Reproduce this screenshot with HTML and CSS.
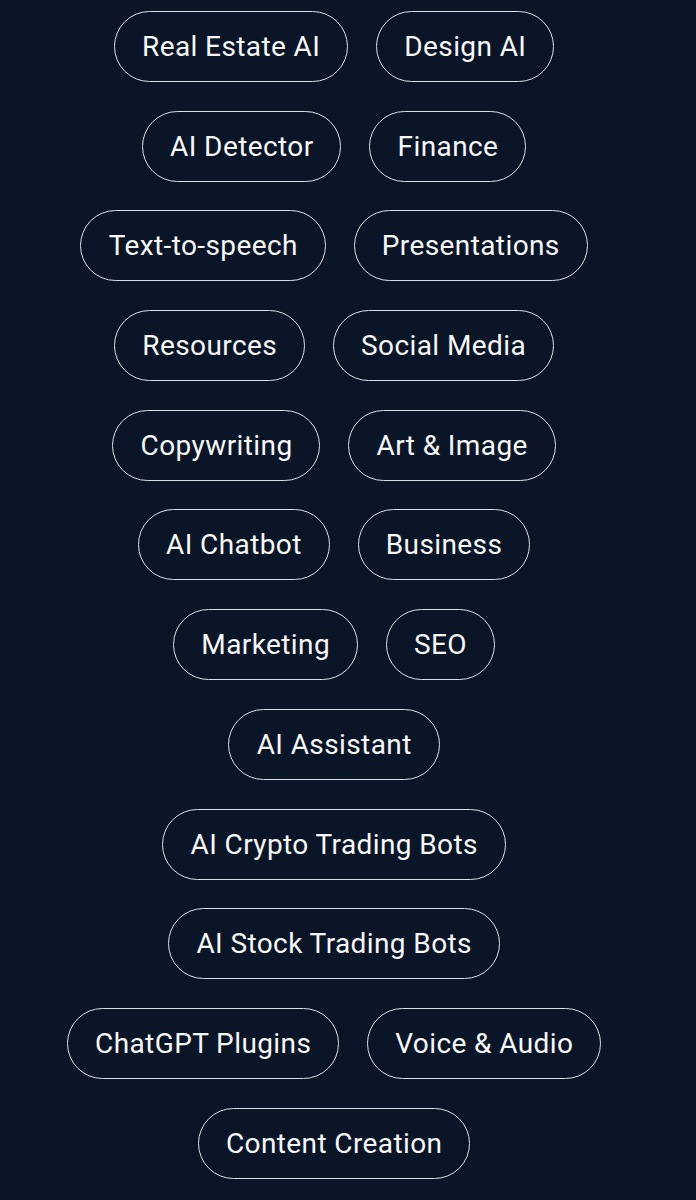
FILE: index.html
```html
<!DOCTYPE html>
<html lang="en">

<head>
    <meta charset="UTF-8">
    <meta name="viewport" content="width=device-width, initial-scale=1.0">
    <title>Categories</title>
    <link rel="stylesheet" href="styles.css">
</head>

<body>
    <div class="tags">
        <a class="tag" href="#">Real Estate AI</a>
        <a class="tag" href="#">Design AI</a>
        <a class="tag" href="#">AI Detector</a>
        <a class="tag" href="#">Finance</a>
        <a class="tag" href="#">Text-to-speech</a>
        <a class="tag" href="#">Presentations</a>
        <a class="tag" href="#">Resources</a>
        <a class="tag" href="#">Social Media</a>
        <a class="tag" href="#">Copywriting</a>
        <a class="tag" href="#">Art &amp; Image</a>
        <a class="tag" href="#">AI Chatbot</a>
        <a class="tag" href="#">Business</a>
        <a class="tag" href="#">Marketing</a>
        <a class="tag" href="#">SEO</a>
        <a class="tag" href="#">AI Assistant</a>
        <a class="tag" href="#">AI Crypto Trading Bots</a>
        <a class="tag" href="#">AI Stock Trading Bots</a>
        <a class="tag" href="#">ChatGPT Plugins</a>
        <a class="tag" href="#">Voice &amp; Audio</a>
        <a class="tag" href="#">Content Creation</a>
    </div>
</body>

</html>
```

FILE: styles.css
```css
body {
    font-family: Roboto, "Liberation Sans", sans-serif;
    margin: 0;
    padding: 0;
    background: #0a1628;
    height: 1200px;
    overflow: hidden;
}

.tags {
    width: 550px;
    margin-left: 59px;
    padding-top: 11px;
    display: flex;
    flex-wrap: wrap;
    justify-content: center;
    gap: 28.7px 28px;
}

.tag {
    display: flex;
    align-items: center;
    height: 71px;
    box-sizing: border-box;
    padding: 0 26.8px 0 27.2px;
    border: 1.8px solid #dde0e5;
    border-radius: 36px;
    color: #f7f7f7;
    font-size: 28px;
    letter-spacing: 0.4px;
    text-decoration: none;
    white-space: nowrap;
}
```
